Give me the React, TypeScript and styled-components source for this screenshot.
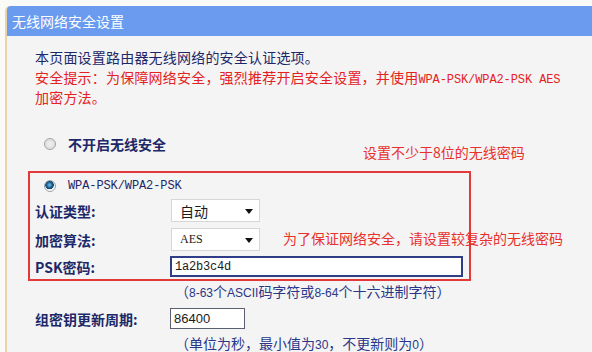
import React from "react";
import styled, { createGlobalStyle } from "styled-components";

const GlobalStyle = createGlobalStyle`
  html, body {
    margin: 0;
    padding: 0;
    background: #fafaf6;
  }
  body {
    font-family: "Noto Sans CJK SC", "Liberation Sans", sans-serif;
    overflow: hidden;
  }
`;

const Page = styled.div`
  padding: 6px 0 0 5px;
  height: 352px;
  box-sizing: border-box;
`;

const Panel = styled.div`
  height: 100%;
  background: #f4f4f4;
  border-left: 2px solid #ead2ad;
  border-top-left-radius: 5px;
  display: flex;
  flex-direction: column;
`;

const Header = styled.div`
  height: 30px;
  line-height: 30px;
  background: #6a9bef;
  color: #fff;
  font-size: 14px;
  padding-left: 5px;
  border-top-left-radius: 4px;
`;

const Body = styled.div`
  position: relative;
  padding: 11px 0 0 21px;
  color: #1c2868;
  font-size: 14px;
`;

const Para = styled.div<{ $red?: boolean }>`
  padding-left: 7px;
  height: 20px;
  line-height: 20px;
  letter-spacing: 0.2px;
  white-space: nowrap;
  color: ${(p) => (p.$red ? "#e4221f" : "#1c2868")};
`;

const Mono = styled.span`
  font-family: "Liberation Mono", monospace;
  font-size: 12px;
  letter-spacing: -0.1px;
`;

const RadioRow = styled.label<{ $top: number; $indent: number }>`
  display: flex;
  align-items: center;
  height: 20px;
  margin-top: ${(p) => p.$top}px;
  padding-left: ${(p) => p.$indent}px;
  gap: 12px;
`;

const RadioDot = styled.span<{ $checked?: boolean }>`
  width: 12px;
  height: 12px;
  box-sizing: border-box;
  border-radius: 50%;
  border: 1px solid #9ba3a8;
  background: ${(p) =>
    p.$checked
      ? "radial-gradient(circle at 45% 40%, #7fc3e8 0, #1f6c9c 2.5px, #123f66 4px, #e8eef2 4.5px, #fff 6px)"
      : "radial-gradient(circle at 50% 50%, #f0f0f0 0, #dcdcdc 6px)"};
`;

const RadioText = styled.span`
  font-weight: 600;
`;

const Box = styled.div`
  margin-top: 17px;
  width: 443px;
  box-sizing: border-box;
  border: 2px solid #e23a3a;
  padding: 1px 0 2px 5px;
`;

const Row = styled.div<{ $top: number; $height: number; $indent?: number }>`
  display: flex;
  align-items: center;
  height: ${(p) => p.$height}px;
  margin-top: ${(p) => p.$top}px;
  padding-left: ${(p) => p.$indent ?? 0}px;
`;

const Label = styled.span`
  width: 135px;
  flex: none;
  font-weight: 600;
`;

const Select = styled.div`
  width: 89px;
  height: 23px;
  box-sizing: border-box;
  margin-left: 1px;
  background: #fff;
  border: 1px solid #d6d6d6;
  display: flex;
  align-items: center;
  justify-content: space-between;
  padding: 0 6px 0 8px;
  font-size: 14px;
  color: #1a1a1a;
`;

const SelectValue = styled.span<{ $serif?: boolean }>`
  font-family: ${(p) =>
    p.$serif ? '"Liberation Serif", serif' : '"Noto Sans CJK SC", sans-serif'};
  font-size: ${(p) => (p.$serif ? "12px" : "14px")};
`;

const Arrow = styled.span`
  width: 0;
  height: 0;
  border-left: 4px solid transparent;
  border-right: 4px solid transparent;
  border-top: 5px solid #111;
  margin-top: 2px;
`;

const TextInput = styled.div<{ $width: number; $strong?: boolean }>`
  width: ${(p) => p.$width}px;
  height: 21px;
  box-sizing: border-box;
  background: #fff;
  border: ${(p) => (p.$strong ? "2px solid #2e3d86" : "1px solid #5a6070")};
  display: flex;
  align-items: center;
  padding-left: 3px;
  color: #1a1a1a;
`;

const InputMono = styled.span`
  font-family: "Liberation Mono", monospace;
  font-size: 12px;
  letter-spacing: -0.2px;
`;

const InputSans = styled.span`
  font-family: "Liberation Sans", sans-serif;
  font-size: 13px;
`;

const Help = styled.div<{ $top: number }>`
  margin-top: ${(p) => p.$top}px;
  padding-left: 147px;
  height: 20px;
  line-height: 20px;
  color: #2a3788;
  white-space: nowrap;
`;

const HelpNum = styled.span`
  font-family: "Liberation Sans", sans-serif;
  font-size: 12px;
`;

const Callout = styled.div<{ $x: number; $y: number }>`
  position: absolute;
  left: ${(p) => p.$x}px;
  top: ${(p) => p.$y}px;
  line-height: 20px;
  color: #e8302c;
  font-size: 14px;
  white-space: nowrap;
`;

export default function App() {
  return (
    <>
      <GlobalStyle />
      <Page>
        <Panel>
          <Header>无线网络安全设置</Header>
          <Body>
            <Para>本页面设置路由器无线网络的安全认证选项。</Para>
            <Para $red>
              安全提示：为保障网络安全，强烈推荐开启安全设置，并使用
              <Mono>WPA-PSK/WPA2-PSK AES</Mono>
            </Para>
            <Para $red>加密方法。</Para>

            <RadioRow $top={27} $indent={16}>
              <RadioDot />
              <RadioText>不开启无线安全</RadioText>
            </RadioRow>

            <Box>
              <RadioRow $top={2} $indent={9}>
                <RadioDot $checked />
                <Mono>WPA-PSK/WPA2-PSK</Mono>
              </RadioRow>
              <Row $top={3} $height={23}>
                <Label>认证类型:</Label>
                <Select>
                  <SelectValue>自动</SelectValue>
                  <Arrow />
                </Select>
              </Row>
              <Row $top={6} $height={23}>
                <Label>加密算法:</Label>
                <Select>
                  <SelectValue $serif>AES</SelectValue>
                  <Arrow />
                </Select>
              </Row>
              <Row $top={5} $height={21}>
                <Label>PSK密码:</Label>
                <TextInput $width={293} $strong>
                  <InputMono>1a2b3c4d</InputMono>
                </TextInput>
              </Row>
            </Box>

            <Help $top={0}>
              （<HelpNum>8-63</HelpNum>个<HelpNum>ASCII</HelpNum>码字符或
              <HelpNum>8-64</HelpNum>个十六进制字符）
            </Help>

            <Row $top={7} $height={21} $indent={7}>
              <Label>组密钥更新周期:</Label>
              <TextInput $width={75}>
                <InputSans>86400</InputSans>
              </TextInput>
            </Row>

            <Help $top={4}>
              （单位为秒，最小值为<HelpNum>30</HelpNum>，不更新则为
              <HelpNum>0</HelpNum>）
            </Help>

            <Callout $x={356} $y={106}>设置不少于8位的无线密码</Callout>
            <Callout $x={276} $y={192}>为了保证网络安全，请设置较复杂的无线密码</Callout>
          </Body>
        </Panel>
      </Page>
    </>
  );
}
